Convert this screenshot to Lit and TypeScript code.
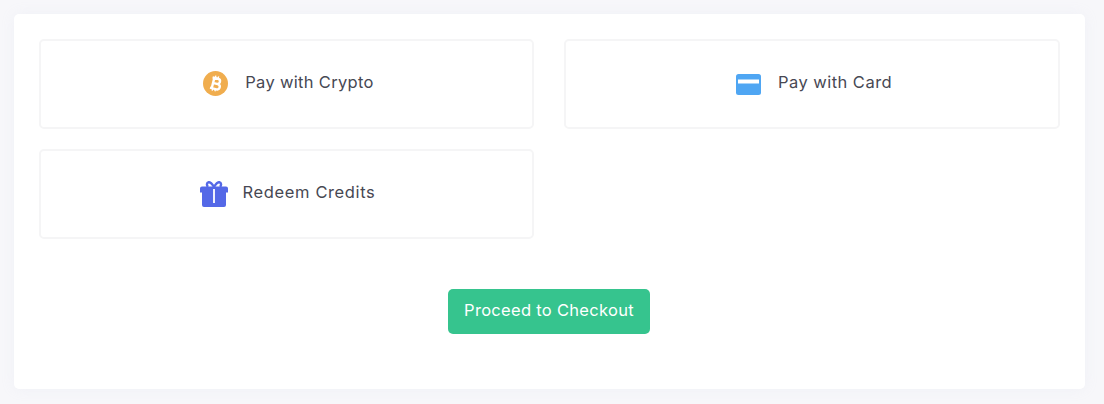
import { LitElement, html, css } from "lit";
import { customElement } from "lit/decorators.js";

@customElement("app-root")
export class AppRoot extends LitElement {
  static styles = css`
    :host {
      display: block;
      width: 1104px;
      height: 404px;
      box-sizing: border-box;
      padding: 14px 19px 15px 14px;
      background: #f7f7fa;
      font-family: Inter, "Liberation Sans", sans-serif;
    }
    .panel {
      height: 375px;
      box-sizing: border-box;
      background: #fff;
      border-radius: 5px;
      padding: 25px 25px 55px;
      box-shadow: 0 0 14px rgba(190, 195, 220, 0.12);
      display: flex;
      flex-direction: column;
    }
    .grid {
      display: grid;
      grid-template-columns: 495px 496px;
      grid-auto-rows: 90px;
      column-gap: 30px;
      row-gap: 20px;
    }
    .option {
      box-sizing: border-box;
      border: 2px solid #f5f5f6;
      border-radius: 5px;
      display: flex;
      align-items: center;
      justify-content: center;
      color: #474853;
      font-size: 16.5px;
      font-weight: 400;
      letter-spacing: 0.32px;
      gap: 17px;
      padding-left: 4px;
    }
    .option.card { letter-spacing: 0.47px; }
    .option.gift { gap: 15px; padding-left: 2px; letter-spacing: 0.62px; }
    .label { padding-bottom: 4px; }
    svg { display: block; flex: none; }
    .coin { margin-bottom: 2px; }
    .action {
      display: flex;
      justify-content: center;
      margin-top: 50px;
      padding-right: 1px;
    }
    button {
      width: 202px;
      height: 45px;
      border: 0;
      border-radius: 5px;
      background: #36c48e;
      color: #fff;
      font: 400 16.5px Inter, "Liberation Sans", sans-serif;
      letter-spacing: 0.3px;
      padding: 0 0 4px;
    }
  `;

  render() {
    return html`
      <div class="panel">
        <div class="grid">
          <div class="option">
            <svg class="coin" width="25" height="25" viewBox="0 0 25 25">
              <circle cx="12.5" cy="12.5" r="12.5" fill="#f0ad4e"></circle>
              <g transform="rotate(14 12.5 12.5)">
                <path fill="none" stroke="#fff" stroke-width="2.400" d="M8.200 7.300h5.600a2.600 2.600 0 0 1 0 5.200H9.800m0 0h5a2.700 2.700 0 0 1 0 5.400H8.200M10 7.300v10.600"></path>
                <path fill="none" stroke="#fff" stroke-width="1.400" d="M11 4.800v2.700M13.800 4.800v2.700M11 17.500v2.700M13.800 17.500v2.700"></path>
              </g>
            </svg>
            <span class="label">Pay with Crypto</span>
          </div>
          <div class="option card">
            <svg width="25" height="21" viewBox="0 0 25 21">
              <rect width="25" height="21" rx="2.500" fill="#4fa6f3"></rect>
              <rect x="2" y="5.500" width="21" height="4" fill="#fff"></rect>
            </svg>
            <span class="label">Pay with Card</span>
          </div>
          <div class="option gift">
            <svg width="28" height="26" viewBox="0 0 28 26">
              <path fill="none" stroke="#5468e7" stroke-width="2.400" d="M14 6C12 2.500 10 1 8.600 1.200 6.600 1.500 6.400 4.500 8 6M14 6c2-3.500 4-5 5.400-4.800 2 .3 2.200 3.300.6 4.800"></path>
              <path fill="#5468e7" d="M2 5.500h24a2 2 0 0 1 2 2v4H0v-4a2 2 0 0 1 2-2zM2 11.500h24V24a2 2 0 0 1-2 2H4a2 2 0 0 1-2-2z"></path>
              <rect x="13.100" y="8" width="1.800" height="14" fill="#fff"></rect>
            </svg>
            <span class="label">Redeem Credits</span>
          </div>
        </div>
        <div class="action"><button>Proceed to Checkout</button></div>
      </div>
    `;
  }
}
